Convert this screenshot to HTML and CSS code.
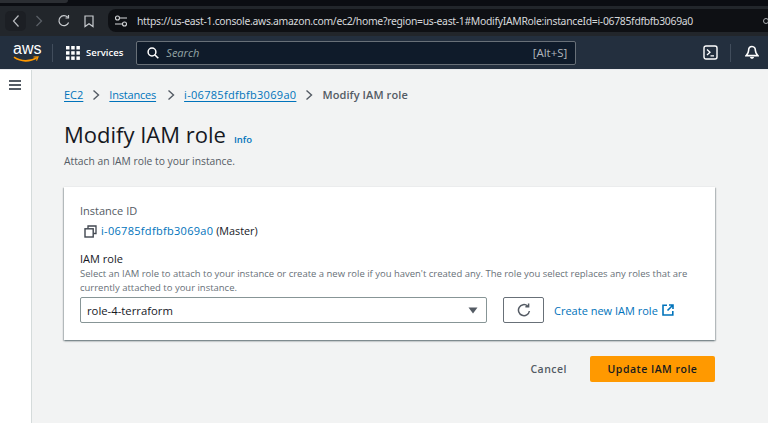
FILE: index.html
```html
<!DOCTYPE html>
<html lang="en">
<head>
    <meta charset="UTF-8">
    <title>Modify IAM role</title>
    <link rel="stylesheet" href="styles.css">
</head>
<body>

<div class="tabstrip"><div class="tab"></div></div>

<div class="toolbar">
    <div class="nav-back">
        <svg width="10" height="14" viewBox="0 0 10 14"><path d="M7.5 1.5 L2.5 7 L7.5 12.5" fill="none" stroke="#b9bcc0" stroke-width="1.2"/></svg>
    </div>
    <div class="nav-btn">
        <svg width="10" height="14" viewBox="0 0 10 14"><path d="M2.5 2 L7.5 7 L2.5 12" fill="none" stroke="#5a5f66" stroke-width="1.3"/></svg>
    </div>
    <div class="nav-btn">
        <svg width="14" height="14" viewBox="0 0 14 14"><path d="M11.6 8.5 A5 5 0 1 1 10.6 3.2 M11.5 1 V4 H8.5" fill="none" stroke="#c9ccd0" stroke-width="1.2"/></svg>
    </div>
    <div class="nav-btn">
        <svg width="12" height="14" viewBox="0 0 12 14"><path d="M2 2 H10 V12.5 L6 9.8 L2 12.5 Z" fill="none" stroke="#c9ccd0" stroke-width="1.2"/></svg>
    </div>
    <div class="urlbar">
        <svg class="tune" width="14" height="12" viewBox="0 0 14 12"><path d="M6 3 H13 M1 9 H8" stroke="#d5d7da" stroke-width="1.1"/><circle cx="3.5" cy="3" r="2" fill="none" stroke="#d5d7da" stroke-width="1.1"/><circle cx="10.5" cy="9" r="2" fill="none" stroke="#d5d7da" stroke-width="1.1"/></svg>
        <span class="url">https://us-east-1.console.aws.amazon.com/ec2/home?region=us-east-1#ModifyIAMRole:instanceId=i-06785fdfbfb3069a0</span>
        <span class="url-dot"></span>
    </div>
</div>

<header class="topnav">
    <div class="logo">
        <span class="logo-text">aws</span>
        <svg class="smile" width="26" height="7" viewBox="0 0 26 7"><path d="M1 1.2 C8 6 17 6 24 1.6" fill="none" stroke="#ff9900" stroke-width="1.6"/><path d="M20.5 1 L25 0.8 L23.5 4.6" fill="none" stroke="#ff9900" stroke-width="1.2"/></svg>
    </div>
    <div class="nav-sep"></div>
    <svg class="grid-icon" width="14" height="14" viewBox="0 0 14 14" fill="#fff">
        <rect x="0" y="0" width="3.5" height="3.5"/><rect x="5.2" y="0" width="3.5" height="3.5"/><rect x="10.4" y="0" width="3.5" height="3.5"/>
        <rect x="0" y="5.2" width="3.5" height="3.5"/><rect x="5.2" y="5.2" width="3.5" height="3.5"/><rect x="10.4" y="5.2" width="3.5" height="3.5"/>
        <rect x="0" y="10.4" width="3.5" height="3.5"/><rect x="5.2" y="10.4" width="3.5" height="3.5"/><rect x="10.4" y="10.4" width="3.5" height="3.5"/>
    </svg>
    <span class="services">Services</span>
    <div class="search">
        <svg width="12" height="12" viewBox="0 0 12 12"><circle cx="5" cy="5" r="3.9" fill="none" stroke="#fff" stroke-width="1.5"/><path d="M8 8 L11.3 11.3" stroke="#fff" stroke-width="1.6"/></svg>
        <span class="search-text">Search</span>
        <span class="search-key">[Alt+S]</span>
    </div>
    <svg class="cloudshell" width="15" height="15" viewBox="0 0 15 15"><rect x="1" y="1" width="13" height="13" rx="2" fill="none" stroke="#fff" stroke-width="1.4"/><path d="M4 4.5 L7 7.2 L4 10 M7.5 10.8 H11" fill="none" stroke="#fff" stroke-width="1.3"/></svg>
    <div class="nav-sep sep-right"></div>
    <svg class="bell" width="14" height="15" viewBox="0 0 14 15"><path d="M7 1.5 C4.6 1.5 3.6 3.4 3.6 5.4 C3.6 7.6 2.4 9 1.2 10.6 H12.8 C11.6 9 10.4 7.6 10.4 5.4 C10.4 3.4 9.4 1.5 7 1.5 Z" fill="none" stroke="#fff" stroke-width="1.6"/><path d="M5 12 C5 14.4 9 14.4 9 12" fill="#fff"/></svg>
</header>

<div class="layout">
    <aside class="sidebar">
        <div class="burger"><span></span><span></span><span></span></div>
    </aside>

    <main class="content">
        <nav class="breadcrumbs">
            <a href="#">EC2</a>
            <svg class="crumb-arrow" width="8" height="12" viewBox="0 0 8 12"><path d="M1.5 1.5 L6.5 6 L1.5 10.5" fill="none" stroke="#545b64" stroke-width="1.4"/></svg>
            <a class="crumb-tight" href="#">Instances</a>
            <svg class="crumb-arrow" width="8" height="12" viewBox="0 0 8 12"><path d="M1.5 1.5 L6.5 6 L1.5 10.5" fill="none" stroke="#545b64" stroke-width="1.4"/></svg>
            <a class="crumb-wide" href="#">i-06785fdfbfb3069a0</a>
            <svg class="crumb-arrow" width="8" height="12" viewBox="0 0 8 12"><path d="M1.5 1.5 L6.5 6 L1.5 10.5" fill="none" stroke="#545b64" stroke-width="1.4"/></svg>
            <span class="crumb-current">Modify IAM role</span>
        </nav>

        <div class="title-row">
            <h1>Modify IAM role</h1>
            <a class="info" href="#">Info</a>
        </div>
        <p class="subtitle">Attach an IAM role to your instance.</p>

        <section class="card">
            <div class="field-label">Instance ID</div>
            <div class="instance-row">
                <svg width="13" height="13" viewBox="0 0 13 13"><path d="M4 3.5 V1 H12 V8.5 H9.5" fill="none" stroke="#414750" stroke-width="1.3"/><rect x="1" y="3.8" width="8.2" height="8.2" fill="none" stroke="#414750" stroke-width="1.4"/></svg>
                <span><a class="plain-link instance-link" href="#">i-06785fdfbfb3069a0</a> (Master)</span>
            </div>
            <div class="role-label">IAM role</div>
            <p class="role-help">Select an IAM role to attach to your instance or create a new role if you haven't created any. The role you select replaces any roles that are currently attached to your instance.</p>
            <div class="role-row">
                <div class="select">
                    <span>role-4-terraform</span>
                    <svg width="10" height="7" viewBox="0 0 10 7"><path d="M0.5 0.5 H9.5 L5 6.5 Z" fill="#545b64"/></svg>
                </div>
                <div class="refresh">
                    <svg width="14" height="14" viewBox="0 0 14 14"><path d="M12.4 8 A5.5 5.5 0 1 1 10.6 3 M11.6 0.6 V3.8 H8.4" fill="none" stroke="#545b64" stroke-width="1.5"/></svg>
                </div>
                <a class="plain-link create" href="#">Create new IAM role</a>
                <svg class="external" width="12" height="12" viewBox="0 0 12 12"><path d="M5 1.2 H1 V11 H10.8 V7 M7 1 H11 V5 M11 1 L5.5 6.5" fill="none" stroke="#0073bb" stroke-width="1.6"/></svg>
            </div>
        </section>

        <div class="actions">
            <button class="btn-cancel">Cancel</button>
            <button class="btn-primary">Update IAM role</button>
        </div>
    </main>
</div>

</body>
</html>
```

FILE: styles.css
```css
html, body {
    margin: 0;
    padding: 0;
    height: 423px;
    overflow: hidden;
}

body {
    font-family: "Open Sans", "Noto Sans", sans-serif;
    background-color: #f2f3f3;
    display: flex;
    flex-direction: column;
}

/* browser chrome */
.tabstrip {
    height: 6px;
    background-color: #0b0d12;
    flex-shrink: 0;
}

.tab {
    width: 68px;
    height: 3px;
    background-color: #2b2e33;
    border-radius: 0 0 4px 0;
}

.toolbar {
    height: 30px;
    background-color: #22262b;
    display: flex;
    align-items: center;
    padding-left: 5px;
    flex-shrink: 0;
}

.nav-back {
    width: 21px;
    height: 20px;
    border-radius: 5px;
    background-color: #1c1f24;
    display: flex;
    align-items: center;
    justify-content: center;
}

.nav-btn {
    width: 25px;
    display: flex;
    justify-content: center;
}

.urlbar {
    flex: 1;
    height: 23px;
    margin: 0 0 1px 7px;
    background-color: #0e1014;
    border-radius: 8px 0 0 8px;
    display: flex;
    align-items: center;
    padding-left: 6px;
}

.tune {
    margin-right: 9px;
}

.url {
    font-family: "Noto Sans", "Open Sans", sans-serif;
    font-size: 10.4px;
    letter-spacing: -0.3px;
    color: #d6d8db;
    white-space: nowrap;
}

.url-dot {
    width: 4px;
    height: 4px;
    border: 1px solid #a9acb0;
    border-radius: 50%;
    margin: 0 -1px 0 auto;
    flex-shrink: 0;
}

/* aws nav */
.topnav {
    height: 33px;
    background-color: #232f3e;
    border-bottom: 1px solid #e9ebed;
    display: flex;
    align-items: center;
    padding: 0 9px 0 13px;
    flex-shrink: 0;
}

.logo {
    width: 26px;
    height: 24px;
    position: relative;
}

.logo-text {
    font-family: "Liberation Sans", sans-serif;
    font-size: 16px;
    line-height: 17px;
    color: #fff;
    display: block;
    margin-top: -1px;
}

.smile {
    position: absolute;
    left: 0;
    top: 15px;
}

.nav-sep {
    width: 1px;
    height: 18px;
    background-color: #414d5c;
    margin-left: 13px;
}

.grid-icon {
    margin-left: 13px;
}

.services {
    font-size: 9.5px;
    font-weight: 600;
    color: #fff;
    margin-left: 6px;
}

.search {
    width: 440px;
    height: 24px;
    margin-left: 13px;
    background-color: #0f1b2a;
    border: 1px solid #687078;
    border-radius: 2px;
    display: flex;
    align-items: center;
    padding: 0 8px 0 10px;
    box-sizing: border-box;
    flex-shrink: 0;
}

.search-text {
    font-size: 11px;
    font-style: italic;
    color: #95a5a6;
    margin-left: 7px;
    flex: 1;
}

.search-key {
    font-size: 11.5px;
    color: #b0b7bd;
}

.cloudshell {
    margin-left: auto;
    flex-shrink: 0;
}

.sep-right {
    margin-left: 12px;
}

.bell {
    margin-left: 14px;
    flex-shrink: 0;
}

/* page */
.layout {
    flex: 1;
    display: flex;
    min-height: 0;
}

.sidebar {
    width: 31px;
    background-color: #fff;
    border-right: 1px solid #d5dbdb;
    flex-shrink: 0;
}

.burger {
    padding: 10px 0 0 9px;
    display: flex;
    flex-direction: column;
    gap: 2.5px;
}

.burger span {
    display: block;
    width: 12px;
    height: 1.5px;
    background-color: #545b64;
}

.content {
    flex: 1;
    min-width: 0;
    padding: 17px 53px 0 32px;
}

.breadcrumbs {
    display: flex;
    align-items: center;
    font-size: 11px;
    line-height: 16px;
}

.breadcrumbs a {
    color: #0073bb;
    text-decoration: underline;
    text-underline-offset: 2px;
}

.breadcrumbs .crumb-tight {
    letter-spacing: -0.2px;
    margin-right: 2px;
}

.breadcrumbs .crumb-wide {
    letter-spacing: 0.3px;
}

.crumb-arrow {
    margin: 0 9px 0 9px;
}

.crumb-current {
    color: #545b64;
    font-weight: 600;
    letter-spacing: 0.1px;
}

.title-row {
    display: flex;
    align-items: baseline;
    margin-top: 16px;
}

h1 {
    font-size: 22px;
    line-height: 30px;
    font-weight: 400;
    color: #16191f;
    margin: 0;
}

.info {
    font-size: 9.5px;
    font-weight: 600;
    color: #0073bb;
    text-decoration: none;
    margin-left: 8px;
}

.subtitle {
    font-size: 10.3px;
    line-height: 14px;
    color: #545b64;
    margin: 5px 0 0;
}

.card {
    background-color: #fff;
    box-shadow: 0 1px 2px 0 rgba(0, 28, 36, 0.4), 1px 1px 1px 0 rgba(0, 28, 36, 0.15), -1px 1px 1px 0 rgba(0, 28, 36, 0.15);
    margin-top: 19px;
    height: 153px;
    padding: 17px 16px 0;
    box-sizing: border-box;
}

.field-label {
    font-size: 11px;
    line-height: 14px;
    color: #545b64;
}

.instance-row {
    display: flex;
    align-items: center;
    gap: 4px;
    margin: 6px 0 0 4px;
    font-size: 10.8px;
    line-height: 14px;
    color: #16191f;
}

.plain-link {
    color: #0073bb;
    text-decoration: none;
}

.instance-link {
    font-size: 11px;
    letter-spacing: 0.3px;
}

.role-label {
    font-size: 11px;
    line-height: 14px;
    color: #16191f;
    margin-top: 14px;
}

.role-help {
    font-size: 9.47px;
    line-height: 14px;
    color: #687078;
    margin: 1px 0 0;
}

.role-row {
    display: flex;
    align-items: center;
    margin-top: 2px;
    font-size: 11px;
}

.select {
    width: 407px;
    height: 26px;
    border: 1px solid #879596;
    border-radius: 2px;
    box-sizing: border-box;
    display: flex;
    align-items: center;
    justify-content: space-between;
    padding: 0 8px 0 6px;
    color: #16191f;
    font-size: 11.3px;
}

.refresh {
    width: 41px;
    height: 26px;
    border: 1px solid #687078;
    border-radius: 2px;
    box-sizing: border-box;
    margin-left: 16px;
    display: flex;
    align-items: center;
    justify-content: center;
}

.create {
    margin-left: 10px;
}

.external {
    margin-left: 4px;
}

.actions {
    display: flex;
    justify-content: flex-end;
    align-items: center;
    margin-top: 16px;
}

.actions button {
    font-family: inherit;
    font-size: 10.5px;
    font-weight: 600;
    letter-spacing: 0.5px;
    height: 26px;
    border: none;
    border-radius: 2px;
    padding: 0;
}

.btn-cancel {
    background: none;
    color: #545b64;
    margin-right: 23px;
}

.btn-primary {
    width: 125px;
    background-color: #ff9900;
    color: #16191f;
}
```
